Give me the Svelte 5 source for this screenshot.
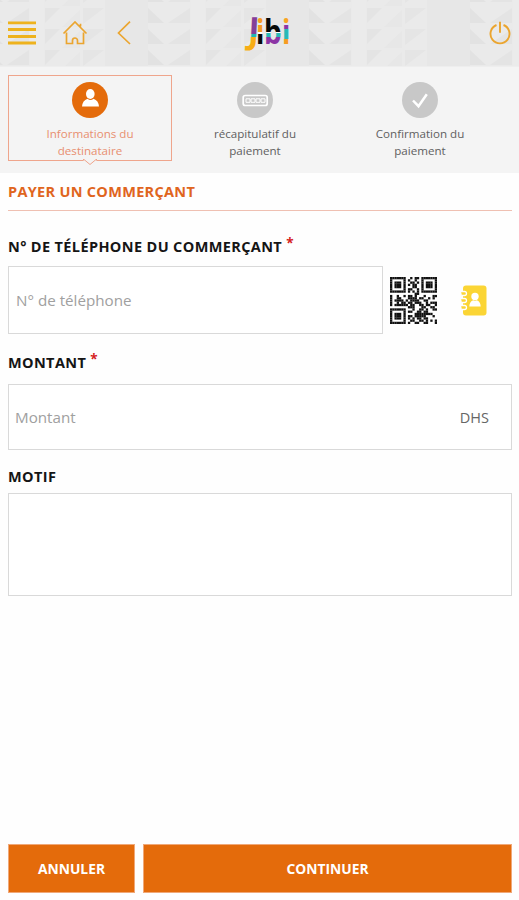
<script>
  const steps = [
    { icon: "user", lines: ["Informations du", "destinataire"], active: true },
    { icon: "card", lines: ["récapitulatif du", "paiement"], active: false },
    { icon: "check", lines: ["Confirmation du", "paiement"], active: false }
  ];

  const qr = [
    "111111100101101111111",
    "100000101001001000001",
    "101110100110101011101",
    "101110101011001011101",
    "101110100011001011101",
    "100000101100101000001",
    "111111101010101111111",
    "000000000001100000000",
    "100100101101000100011",
    "100110001111011001010",
    "101111010111100110000",
    "100101101101110010111",
    "101111110110011011001",
    "000000001110001100110",
    "111111100010011010011",
    "100000101100110110000",
    "101110100001111111100",
    "101110101101111100010",
    "101110101010110110000",
    "100000100110011010101",
    "111111101001100110001"
  ];

  const cells = qr.flatMap((row, y) =>
    [...row].flatMap((cell, x) => (cell === "1" ? [{ x, y }] : []))
  );

  let phone = $state("");
  let amount = $state("");
  let reason = $state("");
</script>

<div class="screen">
  <header class="topbar">
    <svg class="texture" width="519" height="66" aria-hidden="true">
      <defs>
        <pattern id="facets" x="148" y="6" width="161" height="21" patternUnits="userSpaceOnUse">
          <path d="M0 2 16 17H0Z" fill="#dadada" />
          <path d="M42 2V17H20Z" fill="#dedede" />
          <path d="M43 0h14v21H43z" fill="#eeeeee" />
          <path d="M58 2h15L58 17Z" fill="#dedede" />
          <path d="M96 2h21L96 18Z" fill="#e0e0e0" />
          <path d="M118 0h43v21h-43z" fill="#e4e4e4" />
          <path d="M75 21 93 4V21Z" fill="#e4e4e4" />
        </pattern>
      </defs>
      <rect width="519" height="66" fill="url(#facets)" />
    </svg>
    <nav class="left">
      <button class="icon" aria-label="Menu">
        <svg width="30" height="24" viewBox="0 0 30 24" fill="none" stroke="#eeb21d" stroke-width="2.8">
          <path d="M1 1.8h28M1 8.500h28M1 15.500h28M1 22h28" />
        </svg>
      </button>
      <button class="icon home" aria-label="Accueil">
        <svg width="26" height="24" viewBox="0 0 26 24" fill="none" stroke="#eba52f" stroke-width="1.7">
          <path d="M1.500 12.500 13 1l11.500 11.500M18.500 5.500V2.800M4.500 11.500v11H10.500v-3a2.500 2.500 0 0 1 5 0v3h6v-11" />
        </svg>
      </button>
      <button class="icon back" aria-label="Retour">
        <svg width="14" height="24" viewBox="0 0 14 24" fill="none" stroke="#eba52f" stroke-width="1.7">
          <path d="M13 .7 1.500 12 13 23" />
        </svg>
      </button>
    </nav>
    <svg class="logo" width="54" height="44" viewBox="0 0 54 44" role="img" aria-label="jibi">
      <defs>
        <linearGradient id="j" gradientUnits="userSpaceOnUse" x1="0" y1="0" x2="0" y2="44">
          <stop offset=".52" stop-color="#843f98" />
          <stop offset=".52" stop-color="#23b6b4" />
          <stop offset=".59" stop-color="#23b6b4" />
          <stop offset=".59" stop-color="#f8ad16" />
        </linearGradient>
        <linearGradient id="i" gradientUnits="userSpaceOnUse" x1="0" y1="0" x2="0" y2="44">
          <stop offset=".47" stop-color="#f69b22" />
          <stop offset=".47" stop-color="#fff" />
          <stop offset=".52" stop-color="#fff" />
          <stop offset=".52" stop-color="#080808" />
        </linearGradient>
        <linearGradient id="b" gradientUnits="userSpaceOnUse" x1="0" y1="0" x2="0" y2="44">
          <stop offset=".47" stop-color="#080808" />
          <stop offset=".47" stop-color="#fff" />
          <stop offset=".5" stop-color="#fff" />
          <stop offset=".5" stop-color="#28b9b6" />
          <stop offset=".6" stop-color="#28b9b6" />
          <stop offset=".6" stop-color="#8c35a5" />
        </linearGradient>
        <linearGradient id="l" gradientUnits="userSpaceOnUse" x1="0" y1="0" x2="0" y2="44">
          <stop offset=".29" stop-color="#f8a421" />
          <stop offset=".29" stop-color="#8c35a5" />
          <stop offset=".42" stop-color="#8c35a5" />
          <stop offset=".42" stop-color="#28b9b6" />
          <stop offset=".63" stop-color="#28b9b6" />
          <stop offset=".63" stop-color="#f69b22" />
        </linearGradient>
      </defs>
      <g class="wordmark">
        <text transform="translate(12.500 0) skewX(-3) scale(.92 1)" y="32" font-size="36" fill="url(#j)">J</text>
        <text transform="translate(19 0) scale(.8 1)" y="33" font-size="34" fill="url(#i)">i</text>
        <text transform="translate(27 0) scale(.82 1)" y="33" font-size="34" fill="url(#b)">b</text>
        <text transform="translate(45 0) scale(.8 1)" y="33" font-size="34" fill="url(#l)">i</text>
      </g>
    </svg>
    <button class="icon" aria-label="Déconnexion">
      <svg width="22" height="24" viewBox="0 0 22 24" fill="none" stroke="#eba52f" stroke-width="1.900">
        <path d="M7.500 4A9.500 9.500 0 1 0 14.500 4M11 .8v11" />
      </svg>
    </button>
  </header>

  <ol class="steps">
    {#each steps as step}
      <li class="step" class:active={step.active}>
        <span class="badge">
          {#if step.icon === "user"}
            <svg width="36" height="36" viewBox="0 0 36 36" fill="#fff">
              <ellipse cx="18.300" cy="12" rx="4.300" ry="5" />
              <path d="M10 24.500q.5-6 5.500-7.800 3 2.500 6 0 5 1.800 5.500 7.800Z" />
            </svg>
          {:else if step.icon === "card"}
            <svg width="36" height="36" viewBox="0 0 36 36" fill="none" stroke="#fff">
              <rect x="6.200" y="13.500" width="24" height="10" rx="2" stroke-width="1.700" />
              <path d="M9 16.800h4v3.500H9zM14 16.800h4v3.500h-4zM19 16.800h4v3.500h-4zM24 16.800h4v3.500h-4z" stroke-width="1" />
            </svg>
          {:else}
            <svg width="36" height="36" viewBox="0 0 36 36" fill="none" stroke="#fff" stroke-width="2.500">
              <path d="m11 18.500 5.500 5.700 8.300-12" />
            </svg>
          {/if}
        </span>
        <span class="step-label">{step.lines[0]}<br />{step.lines[1]}</span>
        {#if step.active}
          <svg class="notch" width="14" height="7" viewBox="0 0 14 7">
            <path d="M0 0h14v1L7 6 0 1Z" fill="#f4f4f4" />
            <path d="M0 .5h1l6 5 6-5h1" fill="none" stroke="#efa58c" />
          </svg>
        {/if}
      </li>
    {/each}
  </ol>

  <main>
    <h1>PAYER UN COMMERÇANT</h1>

    <label class="phone-label" for="phone">N° DE TÉLÉPHONE DU COMMERÇANT <sup>*</sup></label>
    <div class="phone-row">
      <input id="phone" type="tel" placeholder="N° de téléphone" bind:value={phone} />
      <button class="icon qr" aria-label="Scanner un QR code">
        <svg width="47" height="47" viewBox="0 0 21 21" fill="#111">
          {#each cells as cell}
            <rect x={cell.x} y={cell.y} width="1.030" height="1.030" />
          {/each}
        </svg>
      </button>
      <button class="icon contacts" aria-label="Contacts">
        <svg width="26" height="31" viewBox="0 0 26 31">
          <rect x="2" y=".5" width="23.500" height="30" rx="3" fill="#fbd535" />
          <g fill="#fbd535" stroke="#fff" stroke-width="1.300">
            <path d="M0 6.500h3.500a2 2 0 0 1 0 4H1M0 13.500h3.500a2 2 0 0 1 0 4H1M0 20.500h3.500a2 2 0 0 1 0 4H1" />
          </g>
          <g fill="#fff">
            <circle cx="14" cy="11.500" r="3.700" />
            <path d="M8.300 21.500q.2-5 4-6.200 1.700 1 3.400 0 3.800 1.200 4 6.200Z" />
          </g>
        </svg>
      </button>
    </div>

    <label class="amount-label" for="amount">MONTANT <sup>*</sup></label>
    <div class="amount">
      <input id="amount" inputmode="decimal" placeholder="Montant" bind:value={amount} />
      <span class="currency">DHS</span>
    </div>

    <label class="reason-label" for="reason">MOTIF</label>
    <textarea id="reason" bind:value={reason}></textarea>
  </main>

  <footer>
    <button class="action">ANNULER</button>
    <button class="action">CONTINUER</button>
  </footer>
</div>

<style>
  :global(body) {
    background: #fefefe;
  }

  * {
    box-sizing: border-box;
  }

  .screen {
    display: flex;
    flex-direction: column;
    width: 519px;
    height: 900px;
    overflow: hidden;
    font-family: "Open Sans", sans-serif;
    color: #151515;
  }

  button,
  input,
  textarea {
    font: inherit;
    border: 0;
    padding: 0;
    background: none;
  }

  svg {
    display: block;
  }

  .topbar {
    position: relative;
    display: grid;
    grid-template-columns: 1fr 54px 1fr;
    align-items: center;
    height: 67px;
    padding: 0 8px 0 7px;
    background: #eaeaea;
    border-bottom: 1px solid #eeeeee;
  }

  .texture {
    position: absolute;
    top: 0;
    left: 0;
    opacity: 0.45;
  }

  .left {
    display: flex;
    align-items: center;
  }

  .icon {
    position: relative;
    flex: none;
  }

  .topbar > .icon {
    justify-self: end;
  }

  .home {
    margin-left: 25px;
  }

  .back {
    margin-left: 29px;
  }

  .logo {
    position: relative;
    overflow: visible;
    margin-left: 5px;
  }

  .wordmark {
    font-family: "Open Sans", sans-serif;
    font-weight: 700;
  }

  .steps {
    display: grid;
    grid-template-columns: repeat(3, 164px);
    column-gap: 1px;
    height: 106px;
    margin: 0;
    padding: 8px 8px 12px;
    list-style: none;
    background: #f4f4f4;
  }

  .step {
    position: relative;
    display: flex;
    flex-direction: column;
    align-items: center;
    height: 86px;
    padding-top: 6px;
    border: 1px solid transparent;
    font-size: 11.6px;
    line-height: 17px;
    text-align: center;
    color: #606060;
  }

  .step.active {
    border-color: #efa58c;
    color: #e88f70;
  }

  .badge {
    width: 36px;
    height: 36px;
    margin-bottom: 7px;
    border-radius: 50%;
    background: #c8c8c8;
  }

  .active .badge {
    background: #e46b0b;
  }

  .notch {
    position: absolute;
    bottom: -6px;
    left: 74px;
  }

  main {
    display: flex;
    flex-direction: column;
    padding: 0 7px 0 8px;
  }

  h1 {
    height: 38px;
    margin: 0;
    border-bottom: 1px solid #efc0b2;
    font-size: 14.5px;
    font-weight: 700;
    line-height: 38px;
    letter-spacing: 0.3px;
    color: #e0651d;
  }

  label {
    font-size: 14.5px;
    font-weight: 700;
    line-height: 20px;
    letter-spacing: 0.37px;
  }

  sup {
    position: relative;
    top: 2px;
    font-size: 13.5px;
    line-height: 0;
    color: #d52222;
  }

  .phone-label {
    margin: 26px 0 9px;
  }

  .phone-row {
    display: flex;
    align-items: center;
    height: 68px;
  }

  input,
  textarea {
    border: 1px solid #d9d9d9;
    background: #fff;
    font-size: 15.2px;
    color: #444;
    outline: none;
  }

  input::placeholder {
    color: #a0a0a0;
    opacity: 1;
  }

  .phone-row input {
    width: 375px;
    height: 68px;
    padding: 0 6px 0 7px;
  }

  .qr {
    margin-left: 7px;
  }

  .contacts {
    margin-left: 24px;
  }

  .amount-label {
    margin: 19px 0 11px;
  }

  .amount {
    display: flex;
    align-items: center;
    height: 66px;
    border: 1px solid #d9d9d9;
    background: #fff;
  }

  .amount input {
    flex: 1;
    height: 100%;
    padding: 0 6px;
    border: 0;
  }

  .currency {
    margin-right: 22px;
    font-size: 14.5px;
    color: #666;
  }

  .reason-label {
    margin: 17px 0 6px;
  }

  textarea {
    height: 103px;
    padding: 8px;
    resize: none;
  }

  footer {
    display: grid;
    grid-template-columns: 127px 1fr;
    gap: 8px;
    margin-top: auto;
    padding: 0 7px 7px 8px;
  }

  .action {
    height: 49px;
    border: 1px solid #f0a878;
    background: #e46b0b;
    font-size: 13.8px;
    font-weight: 700;
    color: #fff;
  }
</style>
